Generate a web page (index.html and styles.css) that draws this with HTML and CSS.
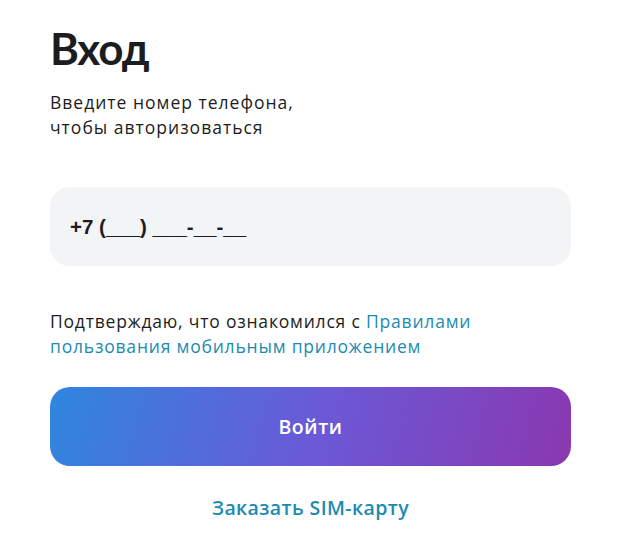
FILE: index.html
```html
<!DOCTYPE html>
<html lang="ru">
<head>
<meta charset="utf-8">
<link rel="stylesheet" href="styles.css">
</head>
<body>
<main class="login">
  <h1 class="title">Вход</h1>
  <p class="subtitle">Введите номер телефона,<br>чтобы авторизоваться</p>
  <div class="phone-field">
    <span class="phone-mask">+7 (___) ___-__-__</span>
  </div>
  <p class="agree">Подтверждаю, что ознакомился с <a class="link" href="#">Правилами пользования мобильным приложением</a></p>
  <button class="submit" type="button">Войти</button>
  <div class="order-row"><a class="order" href="#">Заказать SIM-карту</a></div>
</main>
</body>
</html>
```
FILE: styles.css
```css
html, body {
  margin: 0;
  padding: 0;
  background: #ffffff;
}
body {
  font-family: "Open Sans", "Noto Sans", sans-serif;
  color: #1b1d21;
}
.login {
  width: 521px;
  padding: 20px 0 0 50px;
  display: flex;
  flex-direction: column;
}
.title {
  margin: 0;
  font-family: "Lato", sans-serif;
  font-size: 44px;
  line-height: 56px;
  font-weight: 700;
  letter-spacing: -1px;
}
.subtitle {
  margin: 14px 0 0;
  font-size: 17.5px;
  line-height: 25px;
  letter-spacing: 1px;
}
.phone-field {
  margin-top: 47px;
  height: 79px;
  border-radius: 20px;
  background: #f3f4f6;
  display: flex;
  align-items: center;
  padding-left: 20px;
}
.phone-mask {
  font-family: "Liberation Sans", "Open Sans", sans-serif;
  font-size: 20.5px;
  font-weight: 700;
  color: #1b1d21;
}
.agree {
  margin: 43px 0 0;
  font-size: 17.5px;
  line-height: 25px;
  letter-spacing: 0.8px;
}
.link {
  color: #1b8bb1;
  text-decoration: none;
}
.submit {
  margin-top: 28px;
  height: 79px;
  border: none;
  border-radius: 20px;
  background: linear-gradient(105deg, #2f86de 0%, #6a5ad8 50%, #8a38b0 100%);
  color: #ffffff;
  font-family: "Open Sans", sans-serif;
  font-size: 19.5px;
  font-weight: 600;
  letter-spacing: 0.6px;
}
.order-row {
  margin-top: 28px;
  display: flex;
  justify-content: center;
}
.order {
  color: #1b8bb1;
  text-decoration: none;
  font-size: 19.5px;
  font-weight: 600;
  letter-spacing: 0.4px;
}
```
